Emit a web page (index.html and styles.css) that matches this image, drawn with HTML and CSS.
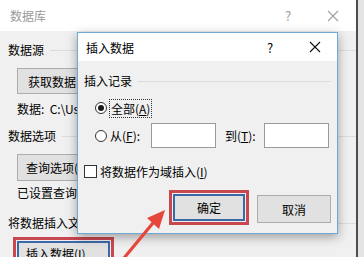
FILE: index.html
```html
<!doctype html>
<html>
<head>
<meta charset="utf-8">
<title>插入数据</title>
<link rel="stylesheet" href="styles.css">
</head>
<body>
<div class="screen">
    <div class="backWin">
        <div class="titleBar">
            <span class="title">数据库</span>
            <span class="help">?</span>
            <span class="close"><svg width="12" height="12" viewBox="0 0 12 12"><path d="M1 1L11 11M11 1L1 11" stroke="#a0a0a0" stroke-width="1.1"/></svg></span>
        </div>
        <div class="backBody">
            <div class="groupLabel">数据源</div>
            <div class="winBtn btnGet">获取数据(<u>D</u>)...</div>
            <div class="infoTxt">数据:&nbsp; C:\Users\Desktop\data.xlsx</div>
            <div class="groupLabel gap2">数据选项</div>
            <div class="winBtn btnQuery">查询选项(<u>Q</u>)...</div>
            <div class="infoTxt txt2">已设置查询选项</div>
            <div class="groupLabel gap3">将数据插入文档</div>
            <div class="redFrame backRed">
                <div class="winBtn focusBtn">插入数据(<u>I</u>)...</div>
            </div>
        </div>
    </div>

    <div class="dialog">
        <div class="titleBar dlgTitle">
            <span class="title">插入数据</span>
            <span class="help">?</span>
            <span class="close"><svg width="12" height="12" viewBox="0 0 12 12"><path d="M1 1L11 11M11 1L1 11" stroke="#111" stroke-width="1.1"/></svg></span>
        </div>
        <div class="dlgBody">
            <div class="groupLabel dlgGroup">插入记录</div>
            <div class="optRow row1">
                <span class="radio on"></span>
                <span class="focusTxt">全部(<u>A</u>)</span>
            </div>
            <div class="optRow row2">
                <span class="radio"></span>
                <span class="fromTxt">从(<u>F</u>):</span>
                <span class="textBox"></span>
                <span class="toTxt">到(<u>T</u>):</span>
                <span class="textBox"></span>
            </div>
            <div class="optRow checkRow">
                <span class="checkBox"></span>
                <span>将数据作为域插入(<u>I</u>)</span>
            </div>
            <div class="btnRow">
                <div class="redFrame okRed">
                    <div class="winBtn focusBtn okBtn">确定</div>
                </div>
                <div class="winBtn cancelBtn">取消</div>
            </div>
        </div>
    </div>

    <svg class="arrow" width="364" height="257" viewBox="0 0 364 257">
        <path d="M124 258L153 223" stroke="#e5473d" stroke-width="3.2" stroke-linecap="round"/>
        <polygon points="165,210 147,218 159,229" fill="#e5473d"/>
    </svg>
</div>
</body>
</html>
```
FILE: styles.css
```css
*{ margin:0; padding:0; box-sizing:border-box}
body{ font-family:"Noto Sans CJK SC","Liberation Sans",sans-serif; font-size:12px; color:#000; background:#e4e4e4}
u{ text-decoration:underline; text-underline-offset:1px}
.screen{ position:relative; width:364px; height:257px; overflow:hidden}

.backWin{ width:358px; height:257px; background:#f0f0f0; border-right:2px solid #4d4d4d}
.titleBar{ display:flex; align-items:center; height:31px; background:#fff; padding:0 17px 0 10px; color:#9a9a9a; font-size:12px}
.titleBar .title{ flex:1}
.titleBar .help{ width:10px; text-align:center; margin-right:34px; font-size:13px}
.titleBar .close{ width:12px; height:12px; display:flex}

.backBody{ padding-left:8px}
.groupLabel{ display:flex; align-items:center; height:16px; line-height:16px; margin-top:11px; white-space:nowrap}
.groupLabel:after{ content:""; flex:1; height:1px; background:#dcdcdc; margin-left:6px}
.winBtn{ display:flex; align-items:center; background:#e1e1e1; border:1px solid #adadad; white-space:nowrap}
.btnGet{ width:130px; height:26px; margin:10px 0 0 9px; padding-left:10px}
.infoTxt{ height:16px; line-height:16px; margin:7px 0 0 9px; white-space:nowrap}
.gap2{ margin-top:11px}
.btnQuery{ width:130px; height:27px; margin:10px 0 0 9px; padding-left:8px}
.txt2{ margin-top:4px}
.gap3{ margin-top:14px}
.redFrame{ border:3px solid #c9474f; padding:1px}
.backRed{ width:101px; height:30px; margin:6px 0 0 5px; border-bottom:none}
.focusBtn{ border:2px solid #3d68a8; height:100%; padding-left:7px}

.dialog{ position:absolute; left:77px; top:32px; width:261px; height:202px; background:#f0f0f0; border:1px solid #6fa9d6; box-shadow:0 3px 10px rgba(0,0,0,.35)}
.dlgTitle{ height:28px; padding:0 16px 0 8px; color:#000}
.dlgTitle .help{ margin-right:34px}
.dlgBody{ padding:0 6px}
.dlgGroup{ margin-top:12px}
.optRow{ display:flex; align-items:center; white-space:nowrap}
.row1{ height:20px; margin-top:9px; padding-left:11px}
.radio{ width:12px; height:12px; border:1px solid #333; border-radius:50%; background:#fff; display:flex; align-items:center; justify-content:center; margin-right:2px}
.radio.on:after{ content:""; width:6px; height:6px; border-radius:50%; background:#1a1a1a}
.focusTxt{ border:1px dotted #333; height:19px; line-height:17px; padding:0 1px; width:43px}
.row2{ height:25px; margin-top:5px; padding-left:11px}
.fromTxt{ width:42px; padding-left:1px}
.textBox{ width:65px; height:25px; background:#fff; border:1px solid #9a9a9a}
.toTxt{ width:39px; margin-left:9px}
.checkRow{ height:14px; margin-top:16px}
.checkBox{ width:13px; height:13px; border:1px solid #333; background:#fff; margin-right:3px}
.btnRow{ display:flex; justify-content:flex-end; align-items:flex-start; margin-top:12px; padding-right:0}
.okRed{ width:80px; height:35px}
.okBtn{ justify-content:center; padding-left:0}
.cancelBtn{ width:74px; height:28px; margin:5px 0 0 8px; justify-content:center}

.arrow{ position:absolute; left:0; top:0; pointer-events:none}
```
